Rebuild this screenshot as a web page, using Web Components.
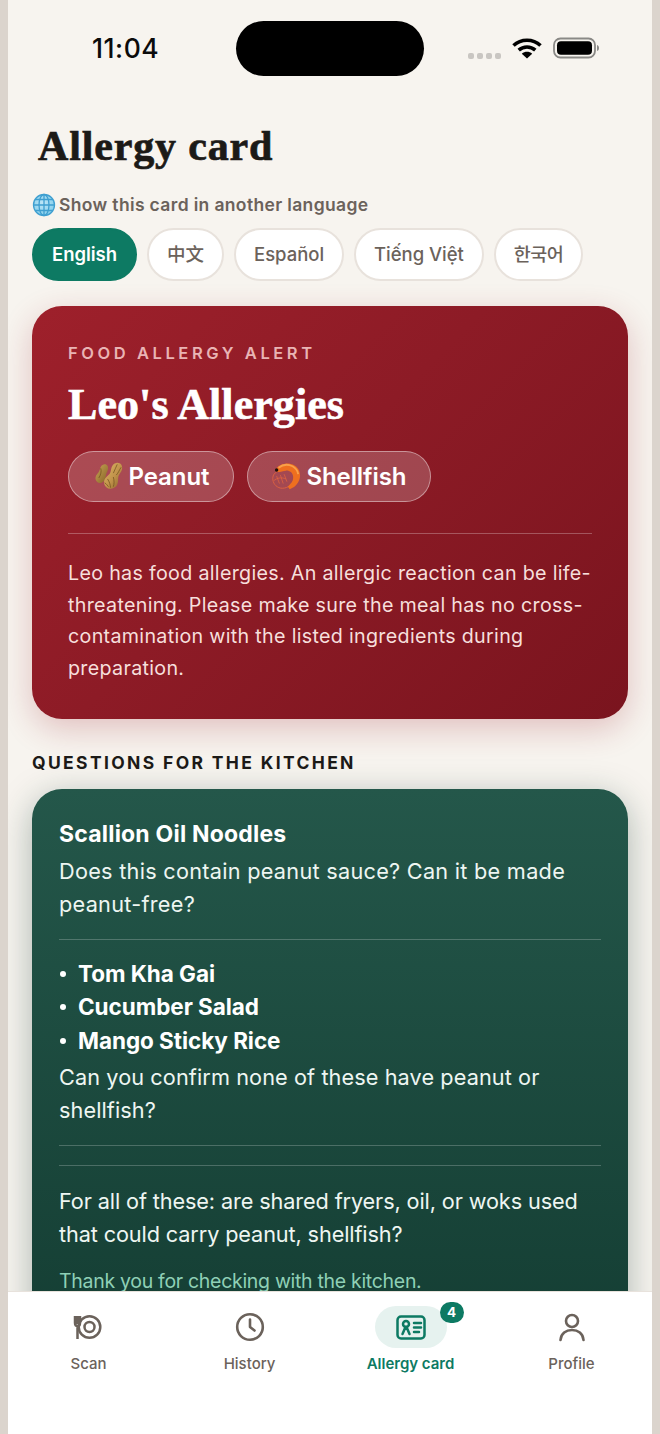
<!DOCTYPE html>
<html lang="en"><head><meta charset="utf-8"><title>Allergy card</title>
<style>
html,body{margin:0;padding:0;height:100%}
body{background:#dbd4cd;font-family:"Inter","Noto Sans CJK SC",sans-serif;overflow:hidden}
</style></head><body>
<app-phone>
  <status-bar slot="status"></status-bar>
  <page-title>Allergy card</page-title>
  <lang-picker label="Show this card in another language"></lang-picker>
  <alert-card></alert-card>
  <kitchen-card></kitchen-card>
  <tab-bar slot="tabs"></tab-bar>
</app-phone>
<script>
const SANS='"Inter","Noto Sans CJK SC","Noto Sans CJK KR",sans-serif';
const SERIF='"Liberation Serif","DejaVu Serif",serif';
function def(name,html,init){
  customElements.define(name,class extends HTMLElement{
    constructor(){super();this.attachShadow({mode:'open'}).innerHTML=typeof html==='function'?html(this):html;}
    connectedCallback(){if(init)init(this);}
  });
}
def('app-phone',`<style>
:host{display:flex;flex-direction:column;width:644px;height:1434px;margin:0 8px;background:#f7f4ef;overflow:hidden;color:#1c1a17}
main{flex:1;min-height:0;overflow:hidden;display:flex;flex-direction:column;padding:0 24px}
</style><slot name="status"></slot><main><slot></slot></main><slot name="tabs"></slot>`);

def('status-bar',`<style>
:host{display:grid;grid-template-columns:1fr 188px 1fr;height:76px;padding-top:21px;box-sizing:content-box;flex:none}
.t{font:500 26.5px/55px "Inter",sans-serif;color:#0b0b0b;padding-left:84px;letter-spacing:.55px}
.i{height:55px;background:#000;border-radius:28px}
.r{display:flex;align-items:flex-start;padding-left:44px;padding-top:17px}
.d{display:flex;gap:3px;margin-top:15px}.d i{width:6px;height:6px;border-radius:2px;background:#c9c6c2}
svg{display:block}
</style><div class="t">11:04</div><div class="i"></div><div class="r">
<div class="d"><i></i><i></i><i></i><i></i></div>
<svg width="30" height="22" viewBox="0 0 30 22" style="margin-left:11px;margin-top:-1px"><path d="M1.5 8.5C9 1.5 21 1.5 28.5 8.5" fill="none" stroke="#000" stroke-width="3.6"/><path d="M6.7 13.2C11.500 9 18.500 9 23.300 13.200" fill="none" stroke="#000" stroke-width="3.6"/><path d="M15 21.500 9.800 16.700C12.800 14.200 17.200 14.200 20.200 16.700Z" fill="#000"/></svg>
<svg width="46" height="22" viewBox="0 0 46 22" style="margin-left:11px;margin-top:-1px"><rect x="1" y="1.500" width="41" height="19" rx="6.500" fill="none" stroke="#8a8986" stroke-width="1.800"/><rect x="4" y="4.200" width="35" height="13.600" rx="4" fill="#000"/><path d="M44 8c1.500.5 2 1.500 2 3s-.5 2.500-2 3z" fill="#8a8986"/></svg>
</div>`);

def('page-title',`<style>:host{display:block;padding:24px 0 0 6px;font:700 42px/50px ${SERIF};letter-spacing:.85px;-webkit-text-stroke:.7px #1c1a17;color:#1c1a17;height:50px;flex:none}</style><slot></slot>`);

def('lang-chip',`<style>
:host{display:block;flex:none;box-sizing:border-box;height:53px;padding:0 18px;border-radius:27px;border:2px solid #e8e2dc;background:#fff;color:#6b625b;font:500 18.500px/49px ${SANS};white-space:nowrap;letter-spacing:-.03px}
:host([active]){background:#0d7a63;border-color:#0d7a63;color:#fff;font-weight:600}
</style><slot></slot>`);

def('lang-picker',()=>`<style>
:host{display:block;flex:none;margin-top:20px}
.l{display:flex;align-items:center;gap:3px;height:28px;font:600 17.500px/28px ${SANS};color:#6b625b;letter-spacing:.35px}
.c{display:flex;gap:10px;margin-top:9px}
svg{display:block;flex:none}
</style><div class="l">
<svg width="24" height="24" viewBox="0 0 24 24"><defs><radialGradient id="g" cx=".45" cy=".4" r=".7"><stop offset="0" stop-color="#bfe6f7"/><stop offset="1" stop-color="#7ccbea"/></radialGradient></defs><circle cx="12" cy="12" r="10.500" fill="url(#g)"/><g fill="none" stroke="#3f9fd0" stroke-width="1.300"><circle cx="12" cy="12" r="10.500"/><ellipse cx="12" cy="12" rx="5" ry="10.500"/><path d="M12 1.500v21M1.500 12h21M3 6.500h18M3 17.500h18"/></g></svg>
<span>Show this card in another language</span></div>
<div class="c"><lang-chip active>English</lang-chip><lang-chip>中文</lang-chip><lang-chip>Español</lang-chip><lang-chip>Tiếng Việt</lang-chip><lang-chip style="letter-spacing:-.6px">한국어</lang-chip></div>`);

def('allergen-pill',`<style>
:host{display:flex;align-items:center;gap:5px;box-sizing:border-box;height:51px;padding:0 23.500px;border-radius:26px;border:1.500px solid rgba(255,255,255,.42);background:rgba(255,255,255,.2);color:#fff;font:600 24px/48px ${SANS};letter-spacing:-.08px;flex:none}
::slotted(svg){display:block}
</style><slot name="i"></slot><slot></slot>`);

def('alert-card',`<style>
:host{display:block;flex:none;margin-top:25px;height:413px;box-sizing:border-box;padding:34px 36px 0;border-radius:30px;background:linear-gradient(135deg,#9e202b 0%,#8d1b26 45%,#7a141e 100%);box-shadow:0 10px 32px rgba(155,31,43,.24);color:#fff}
.k{font:600 16.500px/26px ${SANS};letter-spacing:3.570px;color:#e9b4b4}
h2{margin:11px 0 0;font:700 44px/56px ${SERIF};letter-spacing:.07px;-webkit-text-stroke:.6px #fff;color:#fff}
.p{display:flex;gap:13px;margin-top:18px}
hr{margin:31px 0 0;border:0;height:1px;background:rgba(255,255,255,.27)}
p{margin:24px 0 0;font:400 19.700px/31.500px ${SANS};letter-spacing:.3px;color:#f6dfdc}
</style><div class="k">FOOD ALLERGY ALERT</div><h2>Leo's Allergies</h2>
<div class="p"><allergen-pill><svg slot="i" width="31" height="32" viewBox="0 0 32 32"><defs><linearGradient id="pa" x1="0" y1="0" x2="1" y2="1"><stop offset="0" stop-color="#e0b867"/><stop offset=".55" stop-color="#c0924a"/><stop offset="1" stop-color="#8a6428"/></linearGradient><linearGradient id="pb" x1="0" y1="0" x2="1" y2="1"><stop offset="0" stop-color="#c9a555"/><stop offset="1" stop-color="#856326"/></linearGradient></defs><path d="M11 3c3.500-.8 5 2 4.500 5-.4 2.300-2 4-2.200 6.500-.2 2.500-1.300 6.500-4.700 7.500-3.500 1-6.400-2-6-5.500.4-3 3-4.500 4-7C7.500 7.500 7.500 4 11 3z" fill="url(#pb)"/><path d="M24 1.500c4-.8 6.800 2.400 6 6.500-.6 3-3.200 5-3.800 7.500-.7 3 .3 6-1.500 9-2 3.300-6.800 4.700-10 2.800-3.500-2-4.300-6.700-2-10 1.800-2.600 4.300-3.500 5.300-6.300.9-2.500.8-8.500 6-9.500z" fill="url(#pa)"/><g fill="none" stroke="#6e4d1c" stroke-width=".9" opacity=".8"><path d="M25 3c-1 3-3 6-4 9M29 6c-2 3-3 6-5 8M15 18c2 3 3 6 3 9M21 16c1 4 1 7 0 10M12 22c2 1 3 3 4 4M8 7c1 3 0 7-2 10"/></g></svg>Peanut</allergen-pill>
<allergen-pill><svg slot="i" width="30" height="30" viewBox="0 0 32 32"><path d="M7 10C3 12 1.500 15 2 19c.5 5 5 9 10 9 3 0 6-1 8-3" fill="none" stroke="#e2643f" stroke-width=".9"/><path d="M6 15l3 8M10 14l3 9M14 13l3 8M3 20c3-3 8-4 13-2" fill="none" stroke="#e2643f" stroke-width=".8"/><path d="M5 8C8 3 15 .8 21 2c6 1.200 10 6 10 12 0 6-3.500 11-8 13.500l-3 1.500-2-2.500 2.500-3c2.700-2 3.500-5.500 3-8.500-.5-3.500-3.500-6-7.500-5.800C13 9.400 9 11 6.500 10.500z" fill="#ee6f1f"/><path d="M8 6c4-3 10-4 15-1.500 3.500 2 5.500 5 6 8.500" fill="none" stroke="#f8a14a" stroke-width="2"/><circle cx="6" cy="8.500" r="1.800" fill="#1c0f0a"/></svg>Shellfish</allergen-pill></div>
<hr><p>Leo has food allergies. An allergic reaction can be life-<br>threatening. Please make sure the meal has no cross-<br>contamination with the listed ingredients during<br>preparation.</p>`);

def('kitchen-card',`<style>
:host{display:block;flex:none}
h3{margin:31px 0 0;font:700 17.500px/26px ${SANS};letter-spacing:2.350px;color:#1c1a17}
.c{margin-top:13px;height:640px;box-sizing:border-box;padding:30px 27px 0;border-radius:30px;background:linear-gradient(180deg,#24574a 0%,#123a30 100%);box-shadow:0 8px 34px rgba(20,60,50,.34);color:#eef6f2}
.n{font:700 23px/31px ${SANS};letter-spacing:.2px;color:#fff}
.q{font:400 21.700px/33px ${SANS};letter-spacing:.27px}
hr{margin:18px 0 0;border:0;height:1px;background:rgba(255,255,255,.22)}
ul{list-style:none;margin:17px 0 0;padding:0}
li{position:relative;padding-left:19px;font:700 22.500px/33.400px ${SANS};letter-spacing:-.05px;color:#fff}
li::before{content:"";position:absolute;left:1px;top:14px;width:6px;height:6px;border-radius:50%;background:#fff}
.t{margin-top:17px;font:400 19.500px/26px ${SANS};letter-spacing:-.3px;color:#8fd0b6}
</style><h3>QUESTIONS FOR THE KITCHEN</h3><div class="c">
<div class="n">Scallion Oil Noodles</div><div class="q" style="margin-top:5px">Does this contain peanut sauce? Can it be made<br>peanut-free?</div><hr>
<ul><li>Tom Kha Gai</li><li>Cucumber Salad</li><li>Mango Sticky Rice</li></ul>
<div class="q" style="margin-top:4px;letter-spacing:.09px">Can you confirm none of these have peanut or<br>shellfish?</div>
<hr><hr style="margin-top:19px">
<div class="q" style="margin-top:19px;letter-spacing:-.12px">For all of these: are shared fryers, oil, or woks used<br>that could carry peanut, shellfish?</div>
<div class="t">Thank you for checking with the kitchen.</div></div>`);

def('tab-item',`<style>
:host{flex:1 1 0;display:flex;flex-direction:column;align-items:center;color:#6b625b;font:500 15px/20px ${SANS};letter-spacing:0}
.i{position:relative;width:72px;height:42px;border-radius:21px;display:flex;align-items:center;justify-content:center}
:host([active]){color:#0d7a63;font-weight:600}
:host([active]) .i{background:#e6f2ef}
.l{margin-top:6px}
.b{display:none;position:absolute;left:65px;top:-4px;width:24px;height:21px;border-radius:11px;background:#0d7a63;color:#fff;font:700 13.500px/21px ${SANS};text-align:center}
:host([badge]) .b{display:block}
</style><div class="i"><slot name="icon"></slot><span class="b"></span></div><div class="l"><slot></slot></div>`,
el=>{const b=el.shadowRoot.querySelector('.b');if(el.hasAttribute('badge'))b.textContent=el.getAttribute('badge');});

def('tab-bar',`<style>
:host{display:flex;flex:none;box-sizing:border-box;height:143px;background:#fff;border-top:1px solid #e8e2dc;padding-top:14px;position:relative}
svg{display:block}
</style>
<tab-item><svg slot="icon" width="32" height="32" viewBox="0 0 32 32" fill="none" stroke="currentColor" style="margin-left:-1px"><circle cx="17.500" cy="16" r="10.800" stroke-width="2.500"/><circle cx="17.500" cy="16" r="5" stroke-width="2.500"/><path d="M3 5v7c0 2 1 3 2.500 3V28M5.500 5v8M8 5v7c0 2-1 3-2.500 3" stroke-width="2.500"/></svg>Scan</tab-item>
<tab-item><svg slot="icon" width="32" height="32" viewBox="0 0 32 32" fill="none" stroke="currentColor" stroke-width="2.600" stroke-linecap="round" stroke-linejoin="round"><circle cx="16" cy="16" r="12.800"/><path d="M16 8.500V16l4.500 3.500"/></svg>History</tab-item>
<tab-item active badge="4"><svg slot="icon" width="32" height="32" viewBox="0 0 32 32" fill="none" stroke="currentColor" stroke-width="2.500" stroke-linecap="round" stroke-linejoin="round"><rect x="2.500" y="5.500" width="27" height="22" rx="3.500"/><circle cx="11" cy="13" r="3" /><path d="M10.500 16l-3 7M11.500 16l3 7M19 12h7M19 16.500h7M19 21h5"/></svg>Allergy card</tab-item>
<tab-item><svg slot="icon" width="32" height="32" viewBox="0 0 32 32" fill="none" stroke="currentColor" stroke-width="2.600" stroke-linecap="round"><circle cx="16" cy="10" r="6"/><path d="M4.500 29c.5-6.500 5.500-10 11.500-10s11 3.500 11.500 10"/></svg>Profile</tab-item>`);
</script>
</body></html>
